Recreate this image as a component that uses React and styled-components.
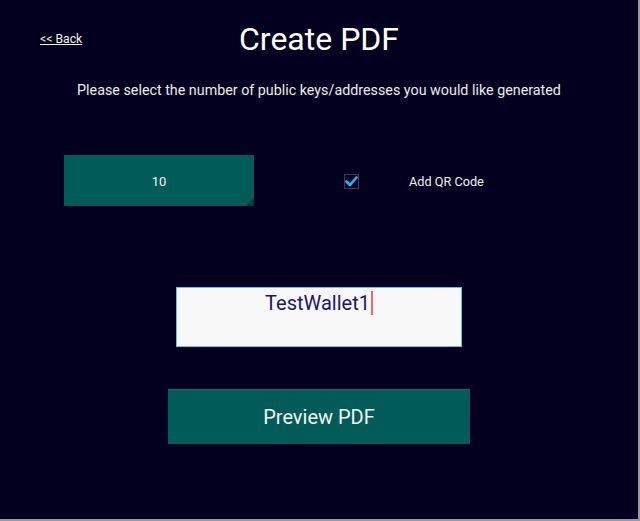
import React, { useState } from 'react'
import styled, { createGlobalStyle } from 'styled-components'

const GlobalStyle = createGlobalStyle`
  body {
    margin: 0;
    background: #9a9a9a;
    font-family: Roboto, "Noto Sans", sans-serif;
  }
`

const Page = styled.div`
  width: 638px;
  height: 519px;
  background: #03001f;
  border-right: 2px solid #9a9a9a;
  border-bottom: 2px solid #9a9a9a;
  display: flex;
  flex-direction: column;
  color: #f4f4f4;
`

const Header = styled.div`
  display: grid;
  grid-template-columns: 1fr auto 1fr;
  align-items: center;
  padding-top: 20px;
  height: 38px;
`

const BackLink = styled.a`
  justify-self: start;
  margin-left: 40px;
  font-size: 12.2px;
  color: #f0f0f0;
  text-decoration: underline;
  cursor: pointer;
`

const Title = styled.h1`
  margin: 0;
  font-size: 32px;
  font-weight: 400;
  line-height: 38px;
  color: #ffffff;
`

const Subtitle = styled.p`
  margin: 22px 0 0;
  text-align: center;
  font-size: 14.3px;
  line-height: 20px;
  color: #ececec;
`

const OptionsRow = styled.div`
  display: flex;
  align-items: center;
  margin-top: 55px;
  padding-left: 64px;
  padding-top: 1px;
`

const CountBox = styled.div`
  position: relative;
  width: 190px;
  height: 51px;
  margin-top: -1px;
  background: #005b59;
  display: flex;
  align-items: center;
  justify-content: center;
  padding-top: 2px;
  box-sizing: border-box;
  font-size: 13px;
  color: #f4f4f4;

  &::after {
    content: '';
    position: absolute;
    right: 0;
    bottom: 0;
    border-style: solid;
    border-width: 0 0 8px 8px;
    border-color: transparent transparent #023a3c transparent;
  }
`

const CheckBox = styled.span`
  margin-left: 90px;
  width: 13px;
  height: 13px;
  border: 1px solid #3b3a5c;
  display: flex;
  align-items: center;
  justify-content: center;
  cursor: pointer;
`

const CheckLabel = styled.span`
  margin-left: 50px;
  font-size: 12.7px;
  color: #f0f0f0;
`

const NameField = styled.div`
  align-self: center;
  margin-top: 81px;
  width: 284px;
  height: 55px;
  background: #f8f8f8;
  border: 1px solid #64c4e0;
  display: flex;
  justify-content: center;
  padding-top: 3px;
  box-sizing: content-box;
  font-size: 20px;
  line-height: 24px;
  color: #1b1668;
`

const Caret = styled.span`
  display: inline-block;
  width: 2px;
  height: 24px;
  margin-left: 1px;
  background: #ee6a6e;
`

const PreviewButton = styled.button`
  align-self: center;
  margin-top: 42px;
  width: 302px;
  height: 55px;
  background: #005b59;
  border: none;
  border-top: 1px solid #0a6d70;
  color: #f6f6f6;
  font-family: Roboto, "Noto Sans", sans-serif;
  font-size: 20px;
  cursor: pointer;
`

const App = () => {
  const [qr, setQr] = useState(true)

  return (
    <>
      <GlobalStyle />
      <Page>
        <Header>
          <BackLink>&lt;&lt; Back</BackLink>
          <Title>Create PDF</Title>
        </Header>
        <Subtitle>Please select the number of public keys/addresses you would like generated</Subtitle>
        <OptionsRow>
          <CountBox>10</CountBox>
          <CheckBox onClick={() => setQr(!qr)}>
            {qr && (
              <svg width="13" height="11" viewBox="0 0 13 11">
                <path d="M1.5 5.5 L5 9 L11.5 1.5" fill="none" stroke="#2fb4ec" strokeWidth="2.6" strokeLinecap="round" strokeLinejoin="round" />
              </svg>
            )}
          </CheckBox>
          <CheckLabel>Add QR Code</CheckLabel>
        </OptionsRow>
        <NameField>
          TestWallet1<Caret />
        </NameField>
        <PreviewButton>Preview PDF</PreviewButton>
      </Page>
    </>
  )
}

export default App
